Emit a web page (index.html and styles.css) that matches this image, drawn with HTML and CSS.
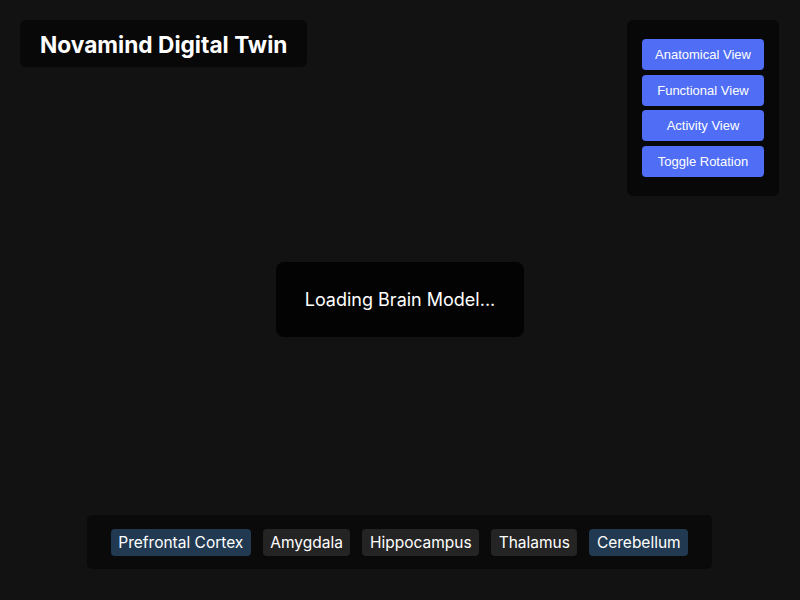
FILE: index.html
```html
<!DOCTYPE html>
<html lang="en">
<head>
<meta charset="utf-8">
<title>Novamind Digital Twin</title>
<link rel="stylesheet" href="styles.css">
</head>
<body>
<div class="viewer">
  <div class="top-row">
    <div class="title-box"><h1 class="title">Novamind Digital Twin</h1></div>
    <div class="controls">
      <button class="ctrl-btn">Anatomical View</button>
      <button class="ctrl-btn">Functional View</button>
      <button class="ctrl-btn">Activity View</button>
      <button class="ctrl-btn">Toggle Rotation</button>
    </div>
  </div>
  <div class="loading">Loading Brain Model...</div>
  <div class="bottom-row">
    <div class="regions">
      <span class="tag tag-active">Prefrontal Cortex</span>
      <span class="tag">Amygdala</span>
      <span class="tag">Hippocampus</span>
      <span class="tag">Thalamus</span>
      <span class="tag tag-active">Cerebellum</span>
    </div>
  </div>
</div>
</body>
</html>
```
FILE: styles.css
```css
html, body {
  margin: 0;
  padding: 0;
  background: #121212;
  color: #ffffff;
  font-family: Inter, "Noto Sans", sans-serif;
}

.viewer {
  position: relative;
  width: 800px;
  height: 600px;
  box-sizing: border-box;
  padding: 20px 21px 31px 20px;
  display: flex;
  flex-direction: column;
  justify-content: space-between;
}

.top-row {
  display: flex;
  justify-content: space-between;
  align-items: flex-start;
}

.title-box {
  background: #080808;
  border-radius: 6px;
  padding: 11px 20px 9px;
}

.title {
  margin: 0;
  font-size: 22.7px;
  line-height: 27px;
  font-weight: 700;
  color: #ffffff;
}

.controls {
  background: #080808;
  border-radius: 6px;
  padding: 19px 15px 19px;
  display: flex;
  flex-direction: column;
  gap: 4.5px;
  width: 122px;
}

.ctrl-btn {
  font-family: "Liberation Sans", Arial, sans-serif;
  font-size: 13px;
  line-height: 15px;
  height: 31px;
  padding: 0 6px;
  border: none;
  border-radius: 4px;
  background: #4f6ef5;
  color: #ffffff;
  white-space: nowrap;
}

.loading {
  position: absolute;
  left: 276px;
  top: 262px;
  width: 248px;
  height: 75px;
  box-sizing: border-box;
  display: flex;
  align-items: center;
  justify-content: center;
  background: #030303;
  border-radius: 8px;
  font-size: 18px;
}

.bottom-row {
  display: flex;
  justify-content: center;
}

.regions {
  background: #0a0a0a;
  border-radius: 5px;
  padding: 14px 24px 13px;
  display: flex;
  gap: 12px;
}

.tag {
  display: inline-block;
  font-size: 15.5px;
  line-height: 19px;
  padding: 4px 7.5px;
  border-radius: 4px;
  background: #242424;
  color: #ffffff;
}

.tag-active {
  background: #213a51;
}
```
